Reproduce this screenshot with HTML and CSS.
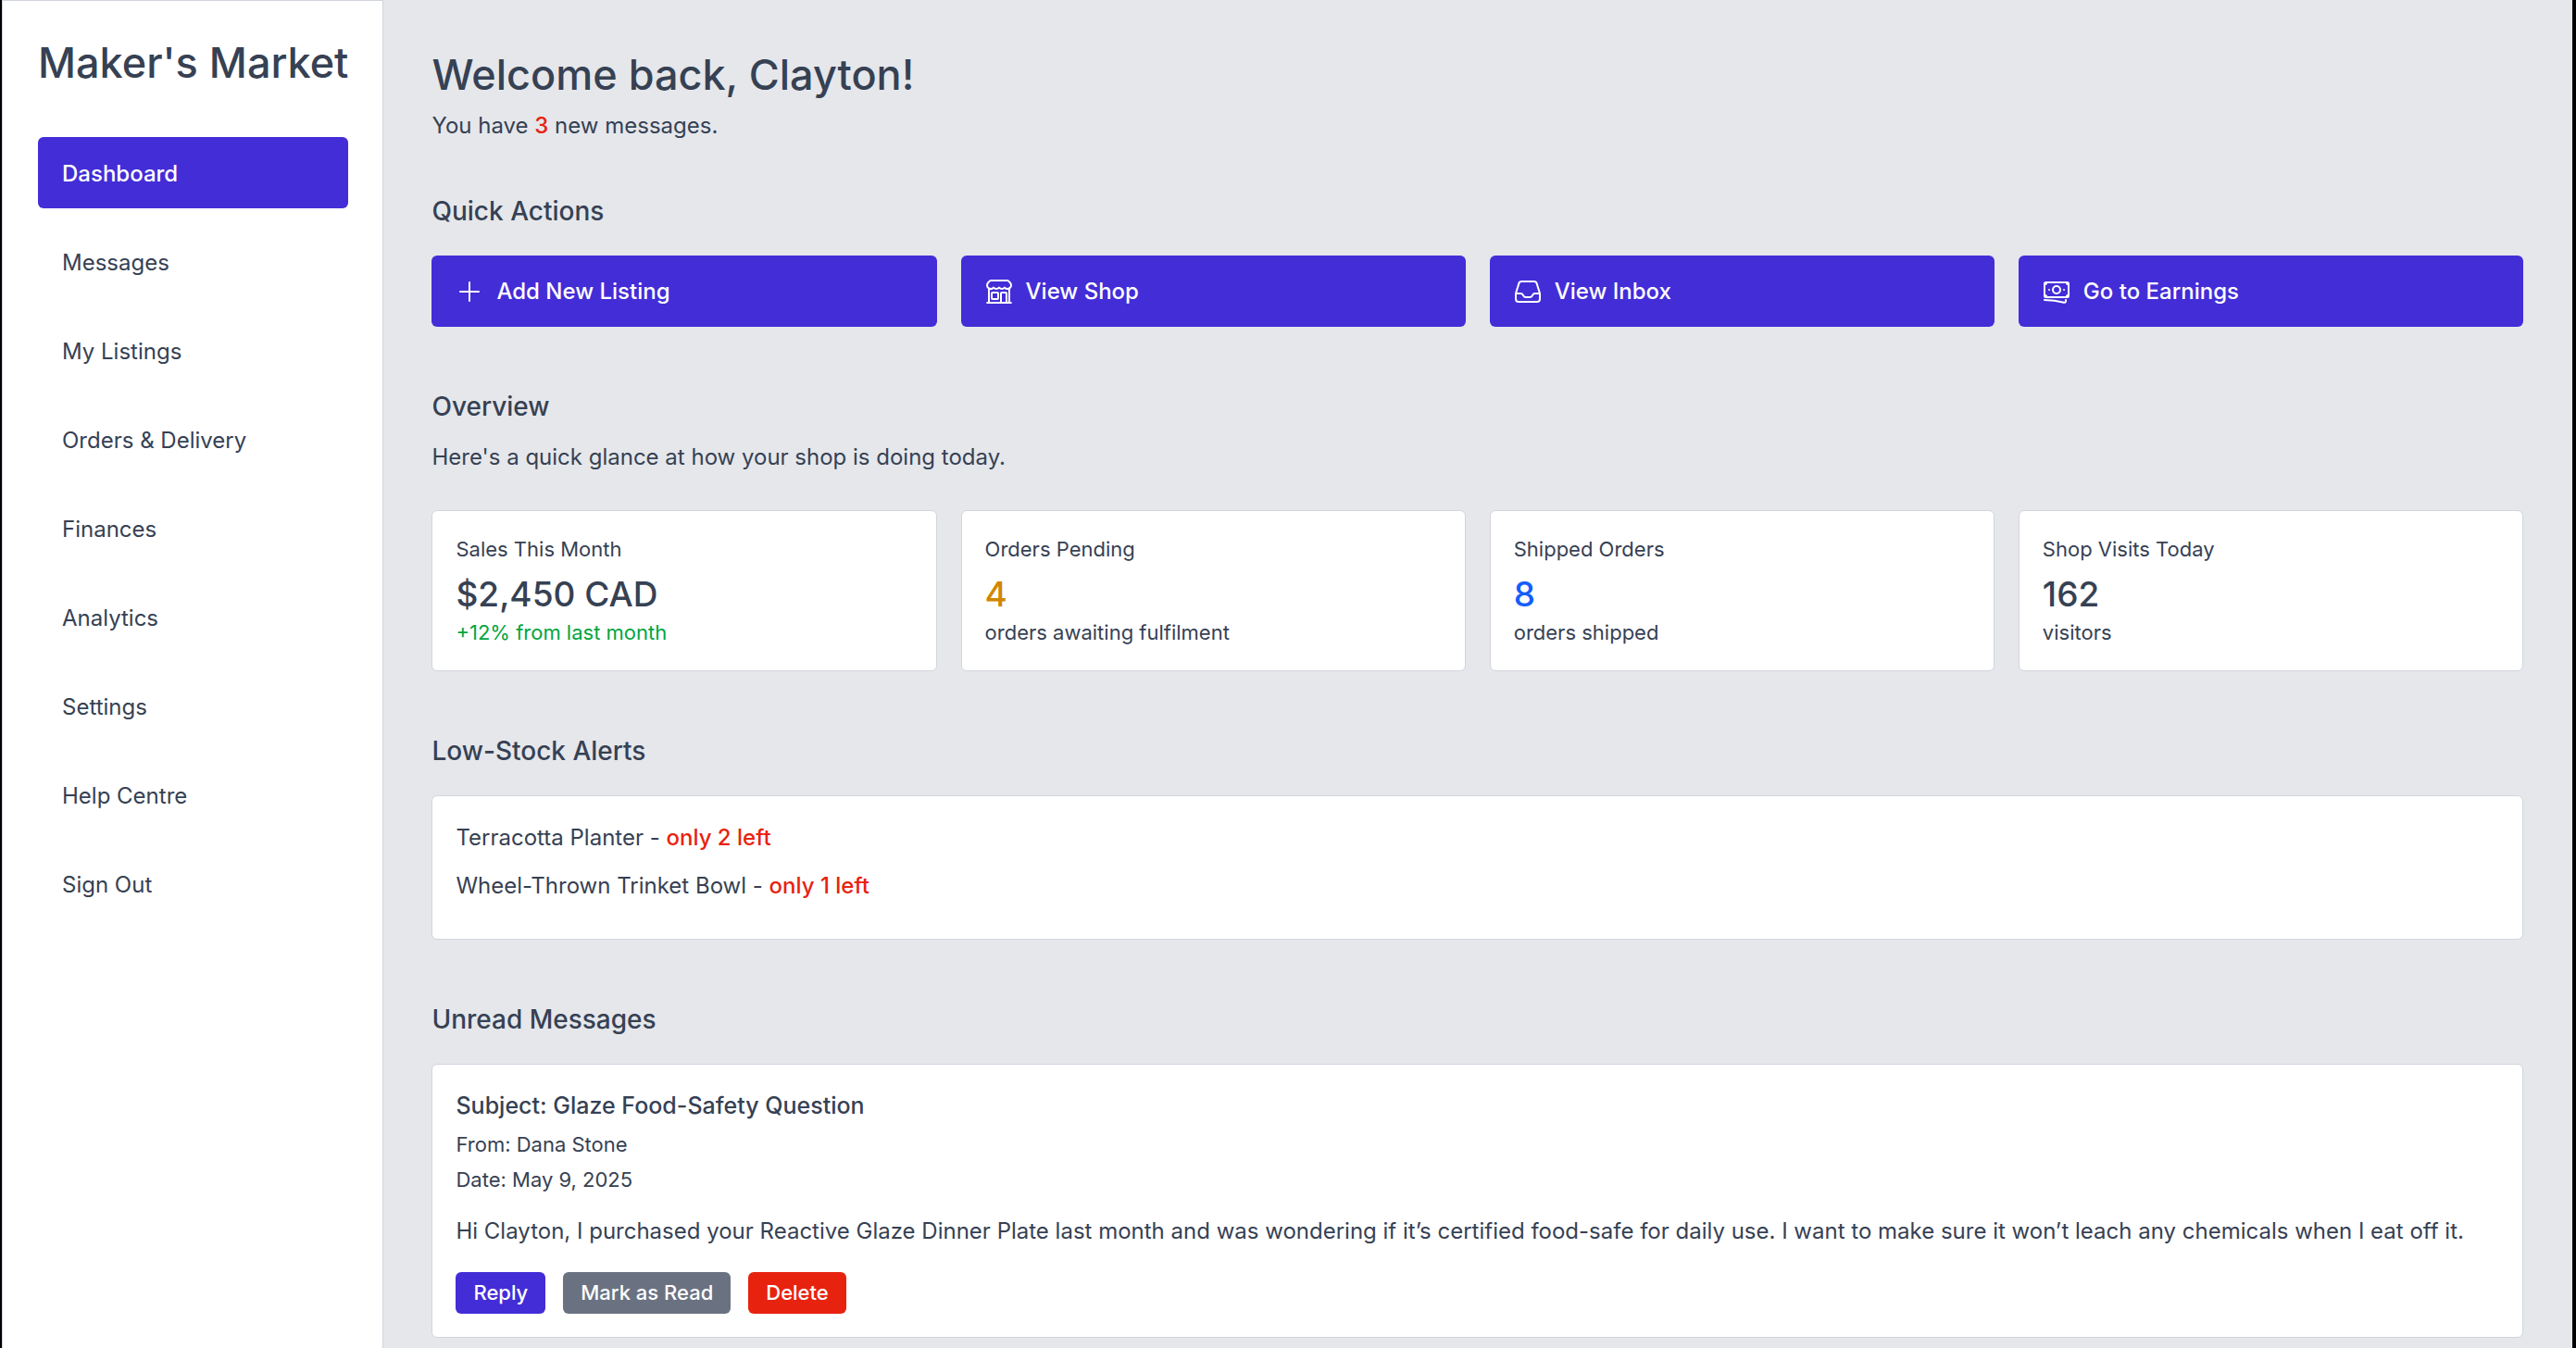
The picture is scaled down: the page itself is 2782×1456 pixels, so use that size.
FILE: index.html
```html
<!DOCTYPE html>
<html lang="en">
<head>
    <meta charset="UTF-8">
    <meta name="viewport" content="width=device-width, initial-scale=1.0">
    <title>Maker's Market</title>
    <link rel="stylesheet" href="styles.css">
</head>
<body>
    <!-- Sidebar -->
    <aside class="sidebar">
        <p class="brand">Maker's Market</p>
        <nav class="nav">
            <a href="#" class="nav-link active">Dashboard</a>
            <a href="#" class="nav-link">Messages</a>
            <a href="#" class="nav-link">My Listings</a>
            <a href="#" class="nav-link">Orders &amp; Delivery</a>
            <a href="#" class="nav-link">Finances</a>
            <a href="#" class="nav-link">Analytics</a>
            <a href="#" class="nav-link">Settings</a>
            <a href="#" class="nav-link">Help Centre</a>
            <a href="#" class="nav-link">Sign Out</a>
        </nav>
    </aside>

    <main class="content">
        <header class="welcome">
            <h1>Welcome back, Clayton!</h1>
            <p>You have <span class="alert">3</span> new messages.</p>
        </header>

        <!-- Quick Actions -->
        <section>
            <h2>Quick Actions</h2>
            <div class="grid">
                <button type="button" class="action">
                    <svg class="icon" viewBox="0 0 24 24" aria-hidden="true"><path d="M12 4.5v15m7.5-7.5h-15"/></svg>
                    Add New Listing
                </button>
                <button type="button" class="action">
                    <svg class="icon" viewBox="0 0 24 24" aria-hidden="true"><path d="M13.5 21v-7.5a.75.75 0 0 1 .75-.75h3a.75.75 0 0 1 .75.75V21m-4.5 0H2.36m11.14 0H18m0 0h3.64m-1.39 0V9.349M3.75 21V9.349m0 0a3.001 3.001 0 0 0 3.75-.615A2.993 2.993 0 0 0 9.75 9.75c.896 0 1.7-.393 2.25-1.016a2.993 2.993 0 0 0 2.25 1.016c.896 0 1.7-.393 2.25-1.015a3.001 3.001 0 0 0 3.75.614m-16.5 0a3.004 3.004 0 0 1-.621-4.72l1.189-1.19A1.5 1.5 0 0 1 5.378 3h13.243a1.5 1.5 0 0 1 1.06.44l1.19 1.189a3 3 0 0 1-.621 4.72M6.75 18h3.75a.75.75 0 0 0 .75-.75V13.5a.75.75 0 0 0-.75-.75H6.75a.75.75 0 0 0-.75.75v3.75c0 .414.336.75.75.75Z"/></svg>
                    View Shop
                </button>
                <button type="button" class="action">
                    <svg class="icon" viewBox="0 0 24 24" aria-hidden="true"><path d="M2.25 13.5h3.86a2.25 2.25 0 0 1 2.012 1.244l.256.512a2.25 2.25 0 0 0 2.013 1.244h3.218a2.25 2.25 0 0 0 2.013-1.244l.256-.512a2.25 2.25 0 0 1 2.013-1.244h3.859m-19.5.338V18a2.25 2.25 0 0 0 2.25 2.25h15A2.25 2.25 0 0 0 21.75 18v-4.162c0-.224-.034-.447-.1-.661L19.24 5.338a2.25 2.25 0 0 0-2.15-1.588H6.911a2.25 2.25 0 0 0-2.15 1.588L2.35 13.177a2.25 2.25 0 0 0-.1.661Z"/></svg>
                    View Inbox
                </button>
                <button type="button" class="action">
                    <svg class="icon" viewBox="0 0 24 24" aria-hidden="true"><path d="M2.25 18.75a60.07 60.07 0 0 1 15.797 2.101c.727.198 1.453-.342 1.453-1.096V18.75M3.75 4.5v.75A.75.75 0 0 1 3 6h-.75m0 0v-.375c0-.621.504-1.125 1.125-1.125H20.25M2.25 6v9m18-10.5v.75c0 .414.336.75.75.75h.75m-1.5-1.5h.375c.621 0 1.125.504 1.125 1.125v9.75c0 .621-.504 1.125-1.125 1.125h-.375m1.5-1.5H21a.75.75 0 0 0-.75.75v.75m0 0H3.75m0 0h-.375a1.125 1.125 0 0 1-1.125-1.125V15m1.5 1.5v-.75A.75.75 0 0 0 3 15h-.75M15 10.5a3 3 0 1 1-6 0 3 3 0 0 1 6 0Zm3 0h.008v.008H18V10.5Zm-12 0h.008v.008H6V10.5Z"/></svg>
                    Go to Earnings
                </button>
            </div>
        </section>

        <!-- Overview -->
        <section>
            <h2 class="with-intro">Overview</h2>
            <p class="intro">Here's a quick glance at how your shop is doing today.</p>
            <div class="grid">
                <div class="card">
                    <h3 class="small">Sales This Month</h3>
                    <p class="figure">$2,450 CAD</p>
                    <p class="small green">+12% from last month</p>
                </div>
                <div class="card">
                    <h3 class="small">Orders Pending</h3>
                    <p class="figure yellow">4</p>
                    <p class="small">orders awaiting fulfilment</p>
                </div>
                <div class="card">
                    <h3 class="small">Shipped Orders</h3>
                    <p class="figure blue">8</p>
                    <p class="small">orders shipped</p>
                </div>
                <div class="card">
                    <h3 class="small">Shop Visits Today</h3>
                    <p class="figure">162</p>
                    <p class="small">visitors</p>
                </div>
            </div>
        </section>

        <!-- Low-Stock Alerts -->
        <section>
            <h2>Low-Stock Alerts</h2>
            <ul class="card stock">
                <li>Terracotta Planter - <span class="alert">only 2 left</span></li>
                <li>Wheel-Thrown Trinket Bowl - <span class="alert">only 1 left</span></li>
            </ul>
        </section>

        <!-- Unread Messages -->
        <section>
            <h2>Unread Messages</h2>
            <article class="card">
                <h3 class="subject">Subject: Glaze Food-Safety Question</h3>
                <p class="small meta">From: Dana Stone</p>
                <p class="small meta">Date: May 9, 2025</p>
                <p class="message">Hi Clayton, I purchased your Reactive Glaze Dinner Plate last month and was wondering if it’s certified food-safe for daily use. I want to make sure it won’t leach any chemicals when I eat off it.</p>
                <div class="buttons">
                    <button type="button" class="btn indigo">Reply</button>
                    <button type="button" class="btn gray">Mark as Read</button>
                    <button type="button" class="btn red">Delete</button>
                </div>
            </article>
        </section>
    </main>
</body>
</html>
```

FILE: styles.css
```css
* {
    box-sizing: border-box;
    margin: 0;
    padding: 0;
}

body {
    display: flex;
    min-height: 100vh;
    border-left: 2px solid #000;
    border-right: 4px solid #000;
    background: #e5e7eb;
    color: #364153;
    font-family: Inter, "Liberation Sans", sans-serif;
    font-size: 24px;
    line-height: 39px;
}

button {
    border: none;
    color: #fff;
    font-family: inherit;
    font-weight: 500;
    cursor: pointer;
}

/* Sidebar */
.sidebar {
    flex-shrink: 0;
    padding: 38px 37px 38px 38px;
    border: 1px solid #d1d5dc;
    border-bottom: none;
    background: #fff;
}

.brand {
    margin-bottom: 51px;
    font-size: 45px;
    font-weight: 500;
    line-height: 58px;
}

.nav {
    display: flex;
    flex-direction: column;
    gap: 19px;
}

.nav-link {
    padding: 20px 26px 18px;
    border-radius: 6px;
    color: inherit;
    text-decoration: none;
}

.nav-link.active {
    background: #432dd7;
    color: #fff;
    font-weight: 500;
}

/* Main content */
.content {
    flex: 1;
    min-width: 0;
    display: flex;
    flex-direction: column;
    gap: 64px;
    padding: 52px 53px 10px 52px;
}

/* the welcome block sits a little closer to the first section */
.welcome {
    margin-bottom: -13px;
}

h1 {
    margin-bottom: 6px;
    font-size: 45px;
    font-weight: 500;
    line-height: 58px;
}

h2 {
    margin-bottom: 25px;
    font-size: 28px;
    font-weight: 500;
    line-height: 45px;
}

.with-intro {
    margin-bottom: 12px;
}

.intro {
    margin-bottom: 38px;
}

.grid {
    display: grid;
    grid-template-columns: repeat(4, 1fr);
    gap: 26px;
}

/* Quick action buttons */
.action {
    display: flex;
    align-items: center;
    gap: 13px;
    padding: 19px 25px;
    border-radius: 6px;
    background: #432dd7;
    font-size: 24px;
    line-height: 39px;
}

.icon {
    width: 32px;
    height: 32px;
    fill: none;
    stroke: currentColor;
    stroke-width: 1.5;
    stroke-linecap: round;
    stroke-linejoin: round;
}

/* Cards */
.card {
    padding: 25px;
    border: 1px solid #d1d5dc;
    border-radius: 6px;
    background: #fff;
}

.small {
    font-size: 22px;
    font-weight: 400;
    line-height: 32px;
}

.figure {
    margin-top: 7px;
    font-size: 37px;
    font-weight: 500;
    line-height: 51px;
}

.stock {
    list-style: none;
}

.stock li {
    margin-bottom: 13px;
}

/* Messages */
.subject {
    font-size: 25px;
    font-weight: 500;
}

.meta {
    margin-top: 6px;
}

.message {
    margin-top: 20px;
}

.buttons {
    display: flex;
    gap: 19px;
    margin-top: 25px;
}

.btn {
    padding: 6px 19px;
    border-radius: 6px;
    font-size: 22px;
    line-height: 33px;
}

/* Colours */
.alert {
    color: #e7230f;
    font-weight: 500;
}

.green {
    color: #00a63e;
}

.yellow {
    color: #d08700;
}

.blue {
    color: #155dfc;
}

.indigo {
    background: #432dd7;
}

.gray {
    background: #6a7282;
}

.red {
    background: #e7230f;
}
```
